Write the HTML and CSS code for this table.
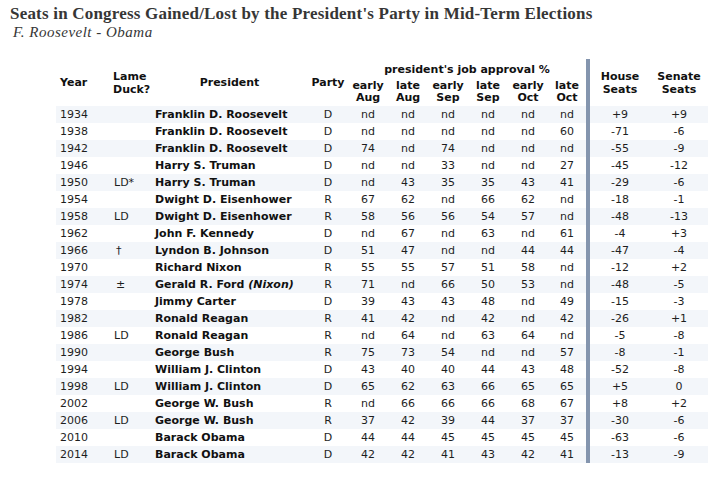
FILE: index.html
```html
<!DOCTYPE html>
<html>
<head>
<meta charset="utf-8">
<link rel="stylesheet" href="styles.css">
</head>
<body>
<div class="page">
  <h1 class="title">Seats in Congress Gained/Lost by the President's Party in Mid-Term Elections</h1>
  <p class="subtitle">F. Roosevelt - Obama</p>
  <table class="data">
    <colgroup>
      <col class="w-year"><col class="w-ld"><col class="w-pres"><col class="w-party">
      <col class="w-num"><col class="w-num"><col class="w-num"><col class="w-num"><col class="w-num"><col class="w-last">
      <col class="w-house"><col class="w-senate">
    </colgroup>
    <thead>
      <tr class="hr1">
        <th rowspan="2" class="left pl-year">Year</th>
        <th rowspan="2" class="left pl-ld two">Lame<br>Duck?</th>
        <th rowspan="2">President</th>
        <th rowspan="2">Party</th>
        <th colspan="6" class="approval">president's job approval %</th>
        <th rowspan="2" class="bar two">House<br>Seats</th>
        <th rowspan="2" class="two">Senate<br>Seats</th>
      </tr>
      <tr class="hr2">
        <th>early<br>Aug</th><th>late<br>Aug</th><th>early<br>Sep</th><th>late<br>Sep</th><th>early<br>Oct</th><th>late<br>Oct</th>
      </tr>
    </thead>
    <tbody>
      <tr><td class="yr">1934</td><td class="ld"></td><td class="pres">Franklin D. Roosevelt</td><td>D</td><td>nd</td><td>nd</td><td>nd</td><td>nd</td><td>nd</td><td>nd</td><td class="bar">+9</td><td>+9</td></tr>
      <tr><td class="yr">1938</td><td class="ld"></td><td class="pres">Franklin D. Roosevelt</td><td>D</td><td>nd</td><td>nd</td><td>nd</td><td>nd</td><td>nd</td><td>60</td><td class="bar">-71</td><td>-6</td></tr>
      <tr><td class="yr">1942</td><td class="ld"></td><td class="pres">Franklin D. Roosevelt</td><td>D</td><td>74</td><td>nd</td><td>74</td><td>nd</td><td>nd</td><td>nd</td><td class="bar">-55</td><td>-9</td></tr>
      <tr><td class="yr">1946</td><td class="ld"></td><td class="pres">Harry S. Truman</td><td>D</td><td>nd</td><td>nd</td><td>33</td><td>nd</td><td>nd</td><td>27</td><td class="bar">-45</td><td>-12</td></tr>
      <tr><td class="yr">1950</td><td class="ld">LD*</td><td class="pres">Harry S. Truman</td><td>D</td><td>nd</td><td>43</td><td>35</td><td>35</td><td>43</td><td>41</td><td class="bar">-29</td><td>-6</td></tr>
      <tr><td class="yr">1954</td><td class="ld"></td><td class="pres">Dwight D. Eisenhower</td><td>R</td><td>67</td><td>62</td><td>nd</td><td>66</td><td>62</td><td>nd</td><td class="bar">-18</td><td>-1</td></tr>
      <tr><td class="yr">1958</td><td class="ld">LD</td><td class="pres">Dwight D. Eisenhower</td><td>R</td><td>58</td><td>56</td><td>56</td><td>54</td><td>57</td><td>nd</td><td class="bar">-48</td><td>-13</td></tr>
      <tr><td class="yr">1962</td><td class="ld"></td><td class="pres">John F. Kennedy</td><td>D</td><td>nd</td><td>67</td><td>nd</td><td>63</td><td>nd</td><td>61</td><td class="bar">-4</td><td>+3</td></tr>
      <tr><td class="yr">1966</td><td class="ld sym">†</td><td class="pres">Lyndon B. Johnson</td><td>D</td><td>51</td><td>47</td><td>nd</td><td>nd</td><td>44</td><td>44</td><td class="bar">-47</td><td>-4</td></tr>
      <tr><td class="yr">1970</td><td class="ld"></td><td class="pres">Richard Nixon</td><td>R</td><td>55</td><td>55</td><td>57</td><td>51</td><td>58</td><td>nd</td><td class="bar">-12</td><td>+2</td></tr>
      <tr><td class="yr">1974</td><td class="ld sym">±</td><td class="pres">Gerald R. Ford <i>(Nixon)</i></td><td>R</td><td>71</td><td>nd</td><td>66</td><td>50</td><td>53</td><td>nd</td><td class="bar">-48</td><td>-5</td></tr>
      <tr><td class="yr">1978</td><td class="ld"></td><td class="pres">Jimmy Carter</td><td>D</td><td>39</td><td>43</td><td>43</td><td>48</td><td>nd</td><td>49</td><td class="bar">-15</td><td>-3</td></tr>
      <tr><td class="yr">1982</td><td class="ld"></td><td class="pres">Ronald Reagan</td><td>R</td><td>41</td><td>42</td><td>nd</td><td>42</td><td>nd</td><td>42</td><td class="bar">-26</td><td>+1</td></tr>
      <tr><td class="yr">1986</td><td class="ld">LD</td><td class="pres">Ronald Reagan</td><td>R</td><td>nd</td><td>64</td><td>nd</td><td>63</td><td>64</td><td>nd</td><td class="bar">-5</td><td>-8</td></tr>
      <tr><td class="yr">1990</td><td class="ld"></td><td class="pres">George Bush</td><td>R</td><td>75</td><td>73</td><td>54</td><td>nd</td><td>nd</td><td>57</td><td class="bar">-8</td><td>-1</td></tr>
      <tr><td class="yr">1994</td><td class="ld"></td><td class="pres">William J. Clinton</td><td>D</td><td>43</td><td>40</td><td>40</td><td>44</td><td>43</td><td>48</td><td class="bar">-52</td><td>-8</td></tr>
      <tr><td class="yr">1998</td><td class="ld">LD</td><td class="pres">William J. Clinton</td><td>D</td><td>65</td><td>62</td><td>63</td><td>66</td><td>65</td><td>65</td><td class="bar">+5</td><td>0</td></tr>
      <tr><td class="yr">2002</td><td class="ld"></td><td class="pres">George W. Bush</td><td>R</td><td>nd</td><td>66</td><td>66</td><td>66</td><td>68</td><td>67</td><td class="bar">+8</td><td>+2</td></tr>
      <tr><td class="yr">2006</td><td class="ld">LD</td><td class="pres">George W. Bush</td><td>R</td><td>37</td><td>42</td><td>39</td><td>44</td><td>37</td><td>37</td><td class="bar">-30</td><td>-6</td></tr>
      <tr><td class="yr">2010</td><td class="ld"></td><td class="pres">Barack Obama</td><td>D</td><td>44</td><td>44</td><td>45</td><td>45</td><td>45</td><td>45</td><td class="bar">-63</td><td>-6</td></tr>
      <tr><td class="yr">2014</td><td class="ld">LD</td><td class="pres">Barack Obama</td><td>D</td><td>42</td><td>42</td><td>41</td><td>43</td><td>42</td><td>41</td><td class="bar">-13</td><td>-9</td></tr>
    </tbody>
  </table>
</div>
</body>
</html>
```

FILE: styles.css
```css
html, body {
  margin: 0;
  padding: 0;
  background: #ffffff;
}

.page {
  padding: 4px 0 0 10px;
}

.title {
  margin: 0;
  font-family: "Liberation Serif", "Times New Roman", serif;
  font-weight: bold;
  font-size: 17px;
  line-height: 20px;
  letter-spacing: 0.2px;
  color: #363636;
}

.subtitle {
  margin: 0 0 0 3px;
  font-family: "Liberation Serif", "Times New Roman", serif;
  font-style: italic;
  font-size: 15px;
  line-height: 17px;
  letter-spacing: 0.5px;
  color: #363636;
}

.data {
  margin: 18px 0 0 46px;
  border-collapse: separate;
  border-spacing: 0;
  table-layout: fixed;
  width: 652px;
  font-family: "DejaVu Sans", Verdana, sans-serif;
  font-size: 11px;
  color: #1e1e1e;
}

.w-year { width: 52px; }
.w-ld { width: 43px; }
.w-pres { width: 157px; }
.w-party { width: 40px; }
.w-num { width: 40px; }
.w-last { width: 38px; }
.w-house { width: 64px; }
.w-senate { width: 58px; }

.data th {
  padding: 0;
  font-weight: bold;
  color: #111111;
  text-align: center;
  vertical-align: middle;
  line-height: 13px;
  white-space: nowrap;
}

.data th.left { text-align: left; }
.data th.pl-year { padding-left: 4px; }
.data th.pl-ld { padding-left: 5px; }

.hr1 { height: 20px; }
.hr2 { height: 27px; }

.hr2 th {
  vertical-align: bottom;
  padding-bottom: 2px;
  line-height: 12px;
}

.data td {
  padding: 0;
  height: 17px;
  line-height: 17px;
  text-align: center;
  white-space: nowrap;
}

.data tbody tr:nth-child(odd) {
  background: #f3f6fa;
}

.data td.yr { text-align: left; padding-left: 4px; }
.data td.ld { text-align: left; padding-left: 6px; }
.data td.sym { padding-left: 8px; }
.data td.pres { text-align: left; padding-left: 4px; font-weight: bold; color: #111111; }

.bar {
  border-left: 4px solid #8495ae;
}
```
